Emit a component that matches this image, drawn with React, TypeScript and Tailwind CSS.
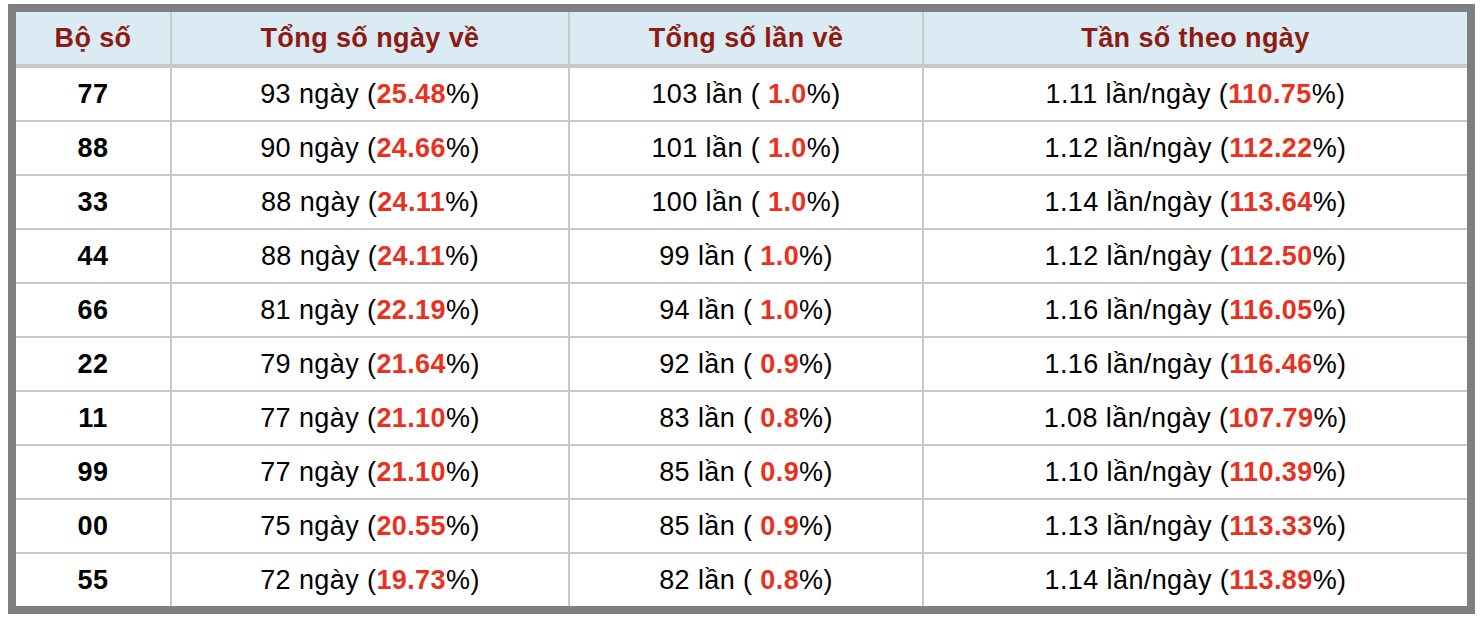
import React from "react";

const rows: [string, string, string, string, string, string, string][] = [
  ["77", "93", "25.48", "103", "1.0", "1.11", "110.75"],
  ["88", "90", "24.66", "101", "1.0", "1.12", "112.22"],
  ["33", "88", "24.11", "100", "1.0", "1.14", "113.64"],
  ["44", "88", "24.11", "99", "1.0", "1.12", "112.50"],
  ["66", "81", "22.19", "94", "1.0", "1.16", "116.05"],
  ["22", "79", "21.64", "92", "0.9", "1.16", "116.46"],
  ["11", "77", "21.10", "83", "0.8", "1.08", "107.79"],
  ["99", "77", "21.10", "85", "0.9", "1.10", "110.39"],
  ["00", "75", "20.55", "85", "0.9", "1.13", "113.33"],
  ["55", "72", "19.73", "82", "0.8", "1.14", "113.89"],
];

const cell = "bg-white h-[52px] flex items-center justify-center text-[27px] tracking-[0.4px] text-black";
const head = "bg-[#dbebf4] h-[52px] flex items-center justify-center text-[27px] tracking-[0.4px] font-bold text-[#8e1a12]";
const red = "font-bold text-[#e8321f]";

export default function App() {
  return (
    <div className="w-[1484px] h-[622px] bg-white pt-[4px] pl-[8px]" style={{ fontFamily: '"Liberation Sans", Arial, sans-serif' }}>
      <div className="w-[1467px] border-[8px] border-[#7f7f7f] bg-[#c9c9c9]">
        <div className="grid grid-cols-[154px_396px_352px_543px] gap-x-[2px] gap-y-[2px]">
          <div className={`${head} border-b-[2px] border-[#c9c9c9] h-[54px]`}>Bộ số</div>
          <div className={`${head} border-b-[2px] border-[#c9c9c9] h-[54px]`}>Tổng số ngày về</div>
          <div className={`${head} border-b-[2px] border-[#c9c9c9] h-[54px]`}>Tổng số lần về</div>
          <div className={`${head} border-b-[2px] border-[#c9c9c9] h-[54px]`}>Tần số theo ngày</div>
          {rows.map((r) => (
            <React.Fragment key={r[0]}>
              <div className={`${cell} font-bold`}>{r[0]}</div>
              <div className={cell}>
                <span className="whitespace-pre">
                  {r[1]} ngày (<span className={red}>{r[2]}</span>%)
                </span>
              </div>
              <div className={cell}>
                <span className="whitespace-pre">
                  {r[3]} lần ( <span className={red}>{r[4]}</span>%)
                </span>
              </div>
              <div className={cell}>
                <span className="whitespace-pre">
                  {r[5]} lần/ngày (<span className={red}>{r[6]}</span>%)
                </span>
              </div>
            </React.Fragment>
          ))}
        </div>
      </div>
    </div>
  );
}
